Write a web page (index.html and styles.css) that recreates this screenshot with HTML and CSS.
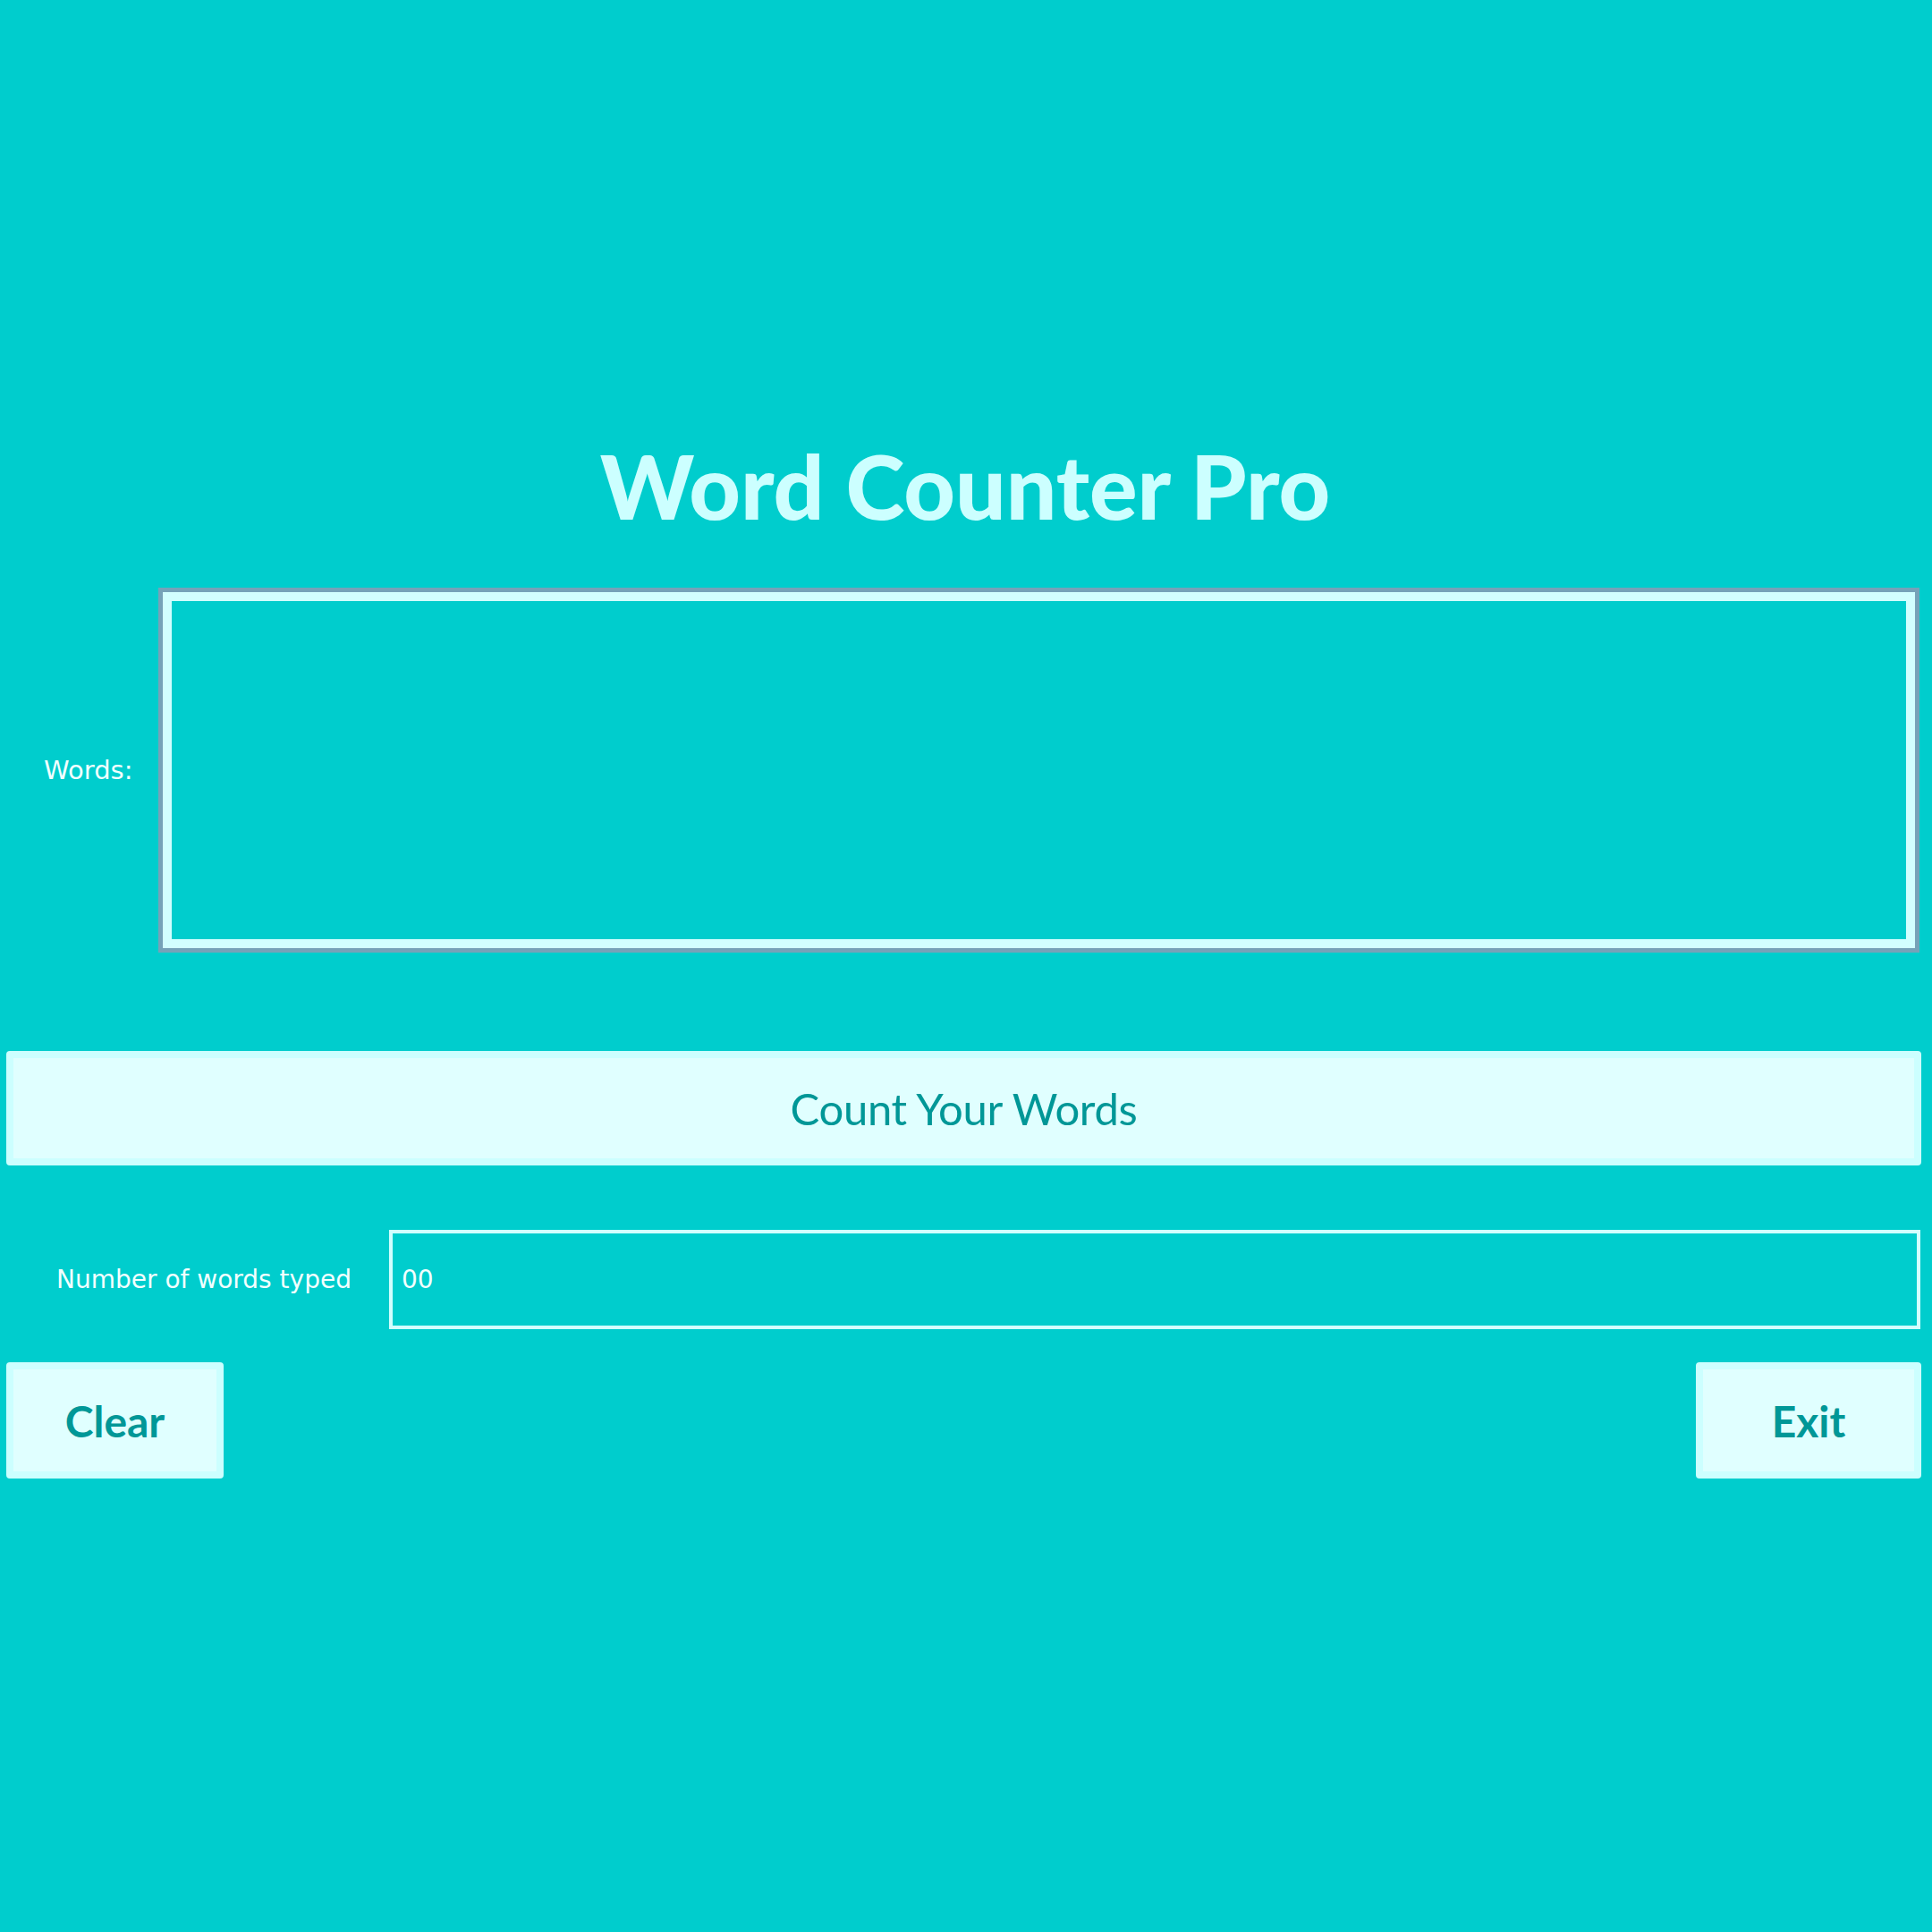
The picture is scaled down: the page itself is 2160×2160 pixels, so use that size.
FILE: index.html
```html
<!DOCTYPE html>
<html lang="en">
<head>
<meta charset="utf-8">
<title>Word Counter Pro</title>
<link rel="stylesheet" href="styles.css">
</head>
<body>
<main class="app">
  <h1 class="title">Word Counter Pro</h1>
  <div class="words-row">
    <label class="field-label words-label" for="words">Words:</label>
    <textarea id="words" class="words-box"></textarea>
  </div>
  <button class="btn count-btn" type="button">Count Your Words</button>
  <div class="result-row">
    <label class="field-label result-label" for="result">Number of words typed</label>
    <input id="result" class="result-box" type="text" value="00">
  </div>
  <div class="actions">
    <button class="btn action-btn clear-btn" type="button">Clear</button>
    <button class="btn action-btn exit-btn" type="button">Exit</button>
  </div>
</main>
</body>
</html>
```

FILE: styles.css
```css
* {
  box-sizing: border-box;
}

html, body {
  margin: 0;
  padding: 0;
  background: #00cdcd;
}

body {
  width: 2160px;
  height: 2160px;
  font-family: "Comic Sans MS", "DejaVu Sans", sans-serif;
}

.app {
  display: flex;
  flex-direction: column;
  padding: 482px 12px 0 7px;
}

.title {
  margin: 0;
  height: 120px;
  line-height: 120px;
  text-align: center;
  font-family: Lato, "Open Sans", sans-serif;
  font-weight: 900;
  font-size: 100px;
  letter-spacing: 0;
  color: #ccffff;
  padding-left: 3px;
}

.field-label {
  color: #f2ffff;
  font-family: "Comic Sans MS", "DejaVu Sans", sans-serif;
}

.words-row {
  display: flex;
  align-items: center;
  margin-top: 55px;
}

.words-label {
  width: 170px;
  padding-left: 42px;
  font-size: 29px;
  flex: none;
}

.words-box {
  flex: 1;
  height: 408px;
  margin: 0 2px 0 0;
  background: #00cdcd;
  border: 5px solid #76a2b8;
  box-shadow: inset 0 0 0 10px #d2ffff;
  border-radius: 0;
  resize: none;
  outline: none;
  padding: 14px;
}

.btn {
  font-family: Lato, "Open Sans", sans-serif;
  color: #009797;
  background: #e0ffff;
  border: 8px solid #ccffff;
  border-radius: 4px;
  padding: 0;
  cursor: pointer;
}

.count-btn {
  margin-top: 110px;
  height: 128px;
  width: 100%;
  font-size: 49px;
  font-weight: 400;
  letter-spacing: -0.3px;
}

.result-row {
  display: flex;
  align-items: center;
  margin-top: 72px;
}

.result-label {
  width: 428px;
  padding-left: 56px;
  font-size: 28px;
  flex: none;
}

.result-box {
  flex: 1;
  height: 111px;
  margin: 0 1px 0 0;
  background: #00cdcd;
  border: 4px solid #d2ffff;
  border-radius: 0;
  outline: none;
  padding: 0 0 0 10px;
  color: #f2ffff;
  font-family: "Comic Sans MS", "DejaVu Sans", sans-serif;
  font-size: 28px;
}

.actions {
  display: flex;
  justify-content: space-between;
  margin-top: 37px;
}

.action-btn {
  height: 130px;
  font-size: 48px;
  font-weight: 700;
}

.clear-btn {
  width: 243px;
}

.exit-btn {
  width: 252px;
}
```
